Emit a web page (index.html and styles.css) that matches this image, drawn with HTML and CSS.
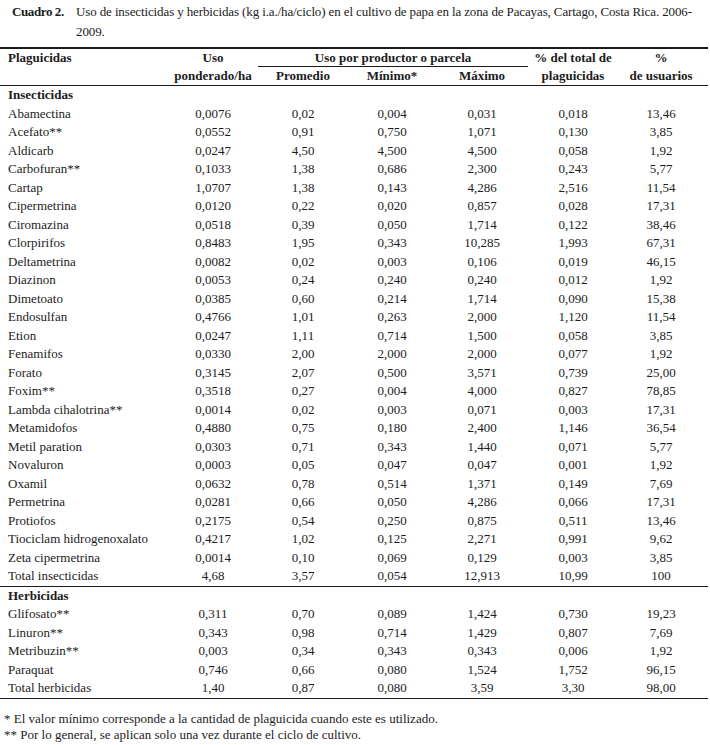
FILE: index.html
```html
<!DOCTYPE html>
<html lang="es">
<head>
<meta charset="utf-8">
<title>Cuadro 2</title>
<link rel="stylesheet" href="styles.css">
</head>
<body>
<div class="page">
  <div class="caption">
    <span class="cap-label">Cuadro 2.</span>
    <span class="cap-text">Uso de insecticidas y herbicidas (kg i.a./ha/ciclo) en el cultivo de papa en la zona de Pacayas, Cartago, Costa Rica. 2006-<br>2009.</span>
  </div>
  <table class="data">
    <colgroup>
      <col class="c1"><col class="c2"><col class="c3"><col class="c4"><col class="c5"><col class="c6"><col class="c7">
    </colgroup>
    <thead>
      <tr class="h1">
        <th class="name">Plaguicidas</th>
        <th>Uso</th>
        <th colspan="3" class="group"><div class="group-label">Uso por productor o parcela</div></th>
        <th>% del total de</th>
        <th>%</th>
      </tr>
      <tr class="h2">
        <th></th>
        <th>ponderado/ha</th>
        <th>Promedio</th>
        <th>Mínimo*</th>
        <th>Máximo</th>
        <th>plaguicidas</th>
        <th>de usuarios</th>
      </tr>
    </thead>
    <tbody class="ins">
      <tr><td class="name sec" colspan="7">Insecticidas</td></tr>
      <tr><td class="name">Abamectina</td><td>0,0076</td><td>0,02</td><td>0,004</td><td>0,031</td><td>0,018</td><td>13,46</td></tr>
      <tr><td class="name">Acefato**</td><td>0,0552</td><td>0,91</td><td>0,750</td><td>1,071</td><td>0,130</td><td>3,85</td></tr>
      <tr><td class="name">Aldicarb</td><td>0,0247</td><td>4,50</td><td>4,500</td><td>4,500</td><td>0,058</td><td>1,92</td></tr>
      <tr><td class="name">Carbofuran**</td><td>0,1033</td><td>1,38</td><td>0,686</td><td>2,300</td><td>0,243</td><td>5,77</td></tr>
      <tr><td class="name">Cartap</td><td>1,0707</td><td>1,38</td><td>0,143</td><td>4,286</td><td>2,516</td><td>11,54</td></tr>
      <tr><td class="name">Cipermetrina</td><td>0,0120</td><td>0,22</td><td>0,020</td><td>0,857</td><td>0,028</td><td>17,31</td></tr>
      <tr><td class="name">Ciromazina</td><td>0,0518</td><td>0,39</td><td>0,050</td><td>1,714</td><td>0,122</td><td>38,46</td></tr>
      <tr><td class="name">Clorpirifos</td><td>0,8483</td><td>1,95</td><td>0,343</td><td>10,285</td><td>1,993</td><td>67,31</td></tr>
      <tr><td class="name">Deltametrina</td><td>0,0082</td><td>0,02</td><td>0,003</td><td>0,106</td><td>0,019</td><td>46,15</td></tr>
      <tr><td class="name">Diazinon</td><td>0,0053</td><td>0,24</td><td>0,240</td><td>0,240</td><td>0,012</td><td>1,92</td></tr>
      <tr><td class="name">Dimetoato</td><td>0,0385</td><td>0,60</td><td>0,214</td><td>1,714</td><td>0,090</td><td>15,38</td></tr>
      <tr><td class="name">Endosulfan</td><td>0,4766</td><td>1,01</td><td>0,263</td><td>2,000</td><td>1,120</td><td>11,54</td></tr>
      <tr><td class="name">Etion</td><td>0,0247</td><td>1,11</td><td>0,714</td><td>1,500</td><td>0,058</td><td>3,85</td></tr>
      <tr><td class="name">Fenamifos</td><td>0,0330</td><td>2,00</td><td>2,000</td><td>2,000</td><td>0,077</td><td>1,92</td></tr>
      <tr><td class="name">Forato</td><td>0,3145</td><td>2,07</td><td>0,500</td><td>3,571</td><td>0,739</td><td>25,00</td></tr>
      <tr><td class="name">Foxim**</td><td>0,3518</td><td>0,27</td><td>0,004</td><td>4,000</td><td>0,827</td><td>78,85</td></tr>
      <tr><td class="name">Lambda cihalotrina**</td><td>0,0014</td><td>0,02</td><td>0,003</td><td>0,071</td><td>0,003</td><td>17,31</td></tr>
      <tr><td class="name">Metamidofos</td><td>0,4880</td><td>0,75</td><td>0,180</td><td>2,400</td><td>1,146</td><td>36,54</td></tr>
      <tr><td class="name">Metil paration</td><td>0,0303</td><td>0,71</td><td>0,343</td><td>1,440</td><td>0,071</td><td>5,77</td></tr>
      <tr><td class="name">Novaluron</td><td>0,0003</td><td>0,05</td><td>0,047</td><td>0,047</td><td>0,001</td><td>1,92</td></tr>
      <tr><td class="name">Oxamil</td><td>0,0632</td><td>0,78</td><td>0,514</td><td>1,371</td><td>0,149</td><td>7,69</td></tr>
      <tr><td class="name">Permetrina</td><td>0,0281</td><td>0,66</td><td>0,050</td><td>4,286</td><td>0,066</td><td>17,31</td></tr>
      <tr><td class="name">Protiofos</td><td>0,2175</td><td>0,54</td><td>0,250</td><td>0,875</td><td>0,511</td><td>13,46</td></tr>
      <tr><td class="name">Tiociclam hidrogenoxalato</td><td>0,4217</td><td>1,02</td><td>0,125</td><td>2,271</td><td>0,991</td><td>9,62</td></tr>
      <tr><td class="name">Zeta cipermetrina</td><td>0,0014</td><td>0,10</td><td>0,069</td><td>0,129</td><td>0,003</td><td>3,85</td></tr>
      <tr class="total"><td class="name">Total insecticidas</td><td>4,68</td><td>3,57</td><td>0,054</td><td>12,913</td><td>10,99</td><td>100</td></tr>
    </tbody>
    <tbody class="herb">
      <tr><td class="name sec" colspan="7">Herbicidas</td></tr>
      <tr><td class="name">Glifosato**</td><td>0,311</td><td>0,70</td><td>0,089</td><td>1,424</td><td>0,730</td><td>19,23</td></tr>
      <tr><td class="name">Linuron**</td><td>0,343</td><td>0,98</td><td>0,714</td><td>1,429</td><td>0,807</td><td>7,69</td></tr>
      <tr><td class="name">Metribuzin**</td><td>0,003</td><td>0,34</td><td>0,343</td><td>0,343</td><td>0,006</td><td>1,92</td></tr>
      <tr><td class="name">Paraquat</td><td>0,746</td><td>0,66</td><td>0,080</td><td>1,524</td><td>1,752</td><td>96,15</td></tr>
      <tr class="total"><td class="name">Total herbicidas</td><td>1,40</td><td>0,87</td><td>0,080</td><td>3,59</td><td>3,30</td><td>98,00</td></tr>
    </tbody>
  </table>
  <div class="notes">
    <p>* El valor mínimo corresponde a la cantidad de plaguicida cuando este es utilizado.</p>
    <p>** Por lo general, se aplican solo una vez durante el ciclo de cultivo.</p>
  </div>
</div>
</body>
</html>
```

FILE: styles.css
```css
html, body {
  margin: 0;
  padding: 0;
  background: #ffffff;
}

.page {
  font-family: "Liberation Serif", "Times New Roman", serif;
  color: #1c1c1c;
  width: 710px;
}

.caption {
  display: flex;
  padding: 2px 0 0 12px;
  font-size: 13px;
  line-height: 20px;
  height: 47px;
  box-sizing: border-box;
}

.cap-label {
  flex: 0 0 64px;
  font-weight: bold;
  letter-spacing: -0.4px;
  white-space: nowrap;
}

.cap-text {
  flex: 1;
  min-width: 0;
  letter-spacing: -0.12px;
  white-space: nowrap;
}

.data {
  border-collapse: collapse;
  table-layout: fixed;
  width: 708px;
  font-size: 13px;
  border-top: 2px solid #1a1a1a;
  border-bottom: 1px solid #1a1a1a;
}

.c1 { width: 172px; }
.c2 { width: 82px; }
.c3 { width: 98px; }
.c4 { width: 80px; }
.c5 { width: 100px; }
.c6 { width: 82px; }
.c7 { width: 94px; }

.data th,
.data td {
  padding: 0;
  text-align: center;
  white-space: nowrap;
}

.data th {
  font-weight: bold;
  line-height: 18px;
  height: 18px;
}

.data .h2 th {
  border-bottom: 1px solid #1a1a1a;
  height: 18px;
  line-height: 18px;
}

.data th.group {
  padding: 0 4px;
  vertical-align: top;
}

.group-label {
  border-bottom: 1px solid #1a1a1a;
  height: 17px;
}

.data .name {
  text-align: left;
  padding-left: 8px;
}

.data td {
  height: 18.5px;
  line-height: 18.5px;
}

.data .sec {
  font-weight: bold;
}

.data .ins .total td {
  border-bottom: 1px solid #1a1a1a;
}

.notes {
  padding: 12px 0 0 4px;
  font-size: 13px;
  line-height: 16.5px;
}

.notes p {
  margin: 0;
}
```
